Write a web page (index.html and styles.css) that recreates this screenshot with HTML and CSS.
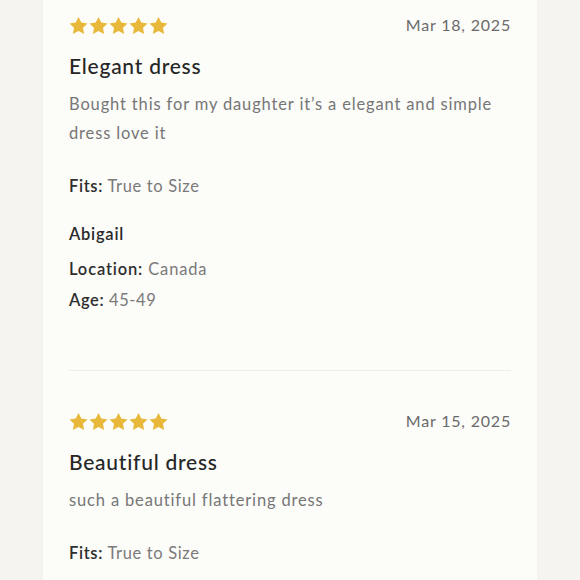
FILE: index.html
```html
<!DOCTYPE html>
<html lang="en">
<head>
<meta charset="utf-8">
<title>Reviews</title>
<link rel="stylesheet" href="styles.css">
</head>
<body>
<div class="card">
  <article class="review first">
    <div class="review-head">
      <svg class="stars" width="100" height="20" viewBox="0 0 100 20" aria-label="5 stars">
        <g fill="#e8b83b">
          <polygon transform="translate(0,0)" points="9.5,1 12.3,6.6 18.5,7.5 14,11.8 15.1,18 9.5,15 3.9,18 5,11.8 0.5,7.5 6.7,6.6"/>
          <polygon transform="translate(20,0)" points="9.5,1 12.3,6.6 18.5,7.5 14,11.8 15.1,18 9.5,15 3.9,18 5,11.8 0.5,7.5 6.7,6.6"/>
          <polygon transform="translate(40,0)" points="9.5,1 12.3,6.6 18.5,7.5 14,11.8 15.1,18 9.5,15 3.9,18 5,11.8 0.5,7.5 6.7,6.6"/>
          <polygon transform="translate(60,0)" points="9.5,1 12.3,6.6 18.5,7.5 14,11.8 15.1,18 9.5,15 3.9,18 5,11.8 0.5,7.5 6.7,6.6"/>
          <polygon transform="translate(80,0)" points="9.5,1 12.3,6.6 18.5,7.5 14,11.8 15.1,18 9.5,15 3.9,18 5,11.8 0.5,7.5 6.7,6.6"/>
        </g>
      </svg>
      <span class="date">Mar 18, 2025</span>
    </div>
    <h2 class="title">Elegant dress</h2>
    <p class="body">Bought this for my daughter it’s a elegant and simple dress love it</p>
    <p class="fits"><span class="label">Fits:</span> True to Size</p>
    <div class="author">
      <p class="name">Abigail</p>
      <p class="meta loc"><span class="label">Location:</span> Canada</p>
      <p class="meta age"><span class="label">Age:</span> 45-49</p>
    </div>
  </article>
  <hr class="divider">
  <article class="review">
    <div class="review-head">
      <svg class="stars" width="100" height="20" viewBox="0 0 100 20" aria-label="5 stars">
        <g fill="#e8b83b">
          <polygon transform="translate(0,0)" points="9.5,1 12.3,6.6 18.5,7.5 14,11.8 15.1,18 9.5,15 3.9,18 5,11.8 0.5,7.5 6.7,6.6"/>
          <polygon transform="translate(20,0)" points="9.5,1 12.3,6.6 18.5,7.5 14,11.8 15.1,18 9.5,15 3.9,18 5,11.8 0.5,7.5 6.7,6.6"/>
          <polygon transform="translate(40,0)" points="9.5,1 12.3,6.6 18.5,7.5 14,11.8 15.1,18 9.5,15 3.9,18 5,11.8 0.5,7.5 6.7,6.6"/>
          <polygon transform="translate(60,0)" points="9.5,1 12.3,6.6 18.5,7.5 14,11.8 15.1,18 9.5,15 3.9,18 5,11.8 0.5,7.5 6.7,6.6"/>
          <polygon transform="translate(80,0)" points="9.5,1 12.3,6.6 18.5,7.5 14,11.8 15.1,18 9.5,15 3.9,18 5,11.8 0.5,7.5 6.7,6.6"/>
        </g>
      </svg>
      <span class="date">Mar 15, 2025</span>
    </div>
    <h2 class="title">Beautiful dress</h2>
    <p class="body">such a beautiful flattering dress</p>
    <p class="fits"><span class="label">Fits:</span> True to Size</p>
  </article>
</div>
</body>
</html>
```
FILE: styles.css
```css
html, body {
  margin: 0;
  padding: 0;
  background: #f5f4f0;
  height: 580px;
  overflow: hidden;
}
body {
  font-family: "Lato", "Open Sans", sans-serif;
  color: #707070;
}
.card {
  margin-left: 43px;
  width: 494px;
  box-sizing: border-box;
  min-height: 580px;
  padding: 16px 26px 0 26px;
  background: #fcfcf9;
  box-shadow: 0 0 3px rgba(0,0,0,0.04);
}
.review {
  display: flex;
  flex-direction: column;
}
.review-head {
  display: flex;
  justify-content: space-between;
  align-items: center;
  height: 20px;
}
.stars {
  display: block;
}
.date {
  font-size: 16px;
  line-height: 20px;
  color: #6a6a6a;
  letter-spacing: 0.8px;
  position: relative;
  top: -1px;
}
.title {
  margin: 16px 0 0 0;
  font-size: 21px;
  line-height: 28px;
  font-weight: 500;
  color: #262626;
  letter-spacing: 0.75px;
}
.body {
  margin: 10px 0 0 0;
  font-size: 16.5px;
  line-height: 29px;
  color: #767676;
  letter-spacing: 0.85px;
}
.fits {
  margin: 26px 0 0 0;
  font-size: 16.5px;
  line-height: 24px;
  color: #7a7a7a;
  letter-spacing: 0.65px;
}
.label {
  color: #2e2e2e;
  font-weight: 600;
}
.author {
  display: flex;
  flex-direction: column;
  margin-top: 24px;
}
.name {
  margin: 0;
  font-size: 16.5px;
  line-height: 24px;
  font-weight: 600;
  color: #2a2a2a;
  letter-spacing: 0.75px;
}
.meta {
  margin: 0;
  font-size: 16.5px;
  line-height: 24px;
  color: #7a7a7a;
  letter-spacing: 0.85px;
}
.loc { margin-top: 11px; }
.age { margin-top: 7px; letter-spacing: 0.6px; }
.divider {
  margin: 58px 0 0 0;
  border: 0;
  height: 1px;
  background: #eeede8;
}
.divider + .review {
  padding-top: 41px;
}
```
